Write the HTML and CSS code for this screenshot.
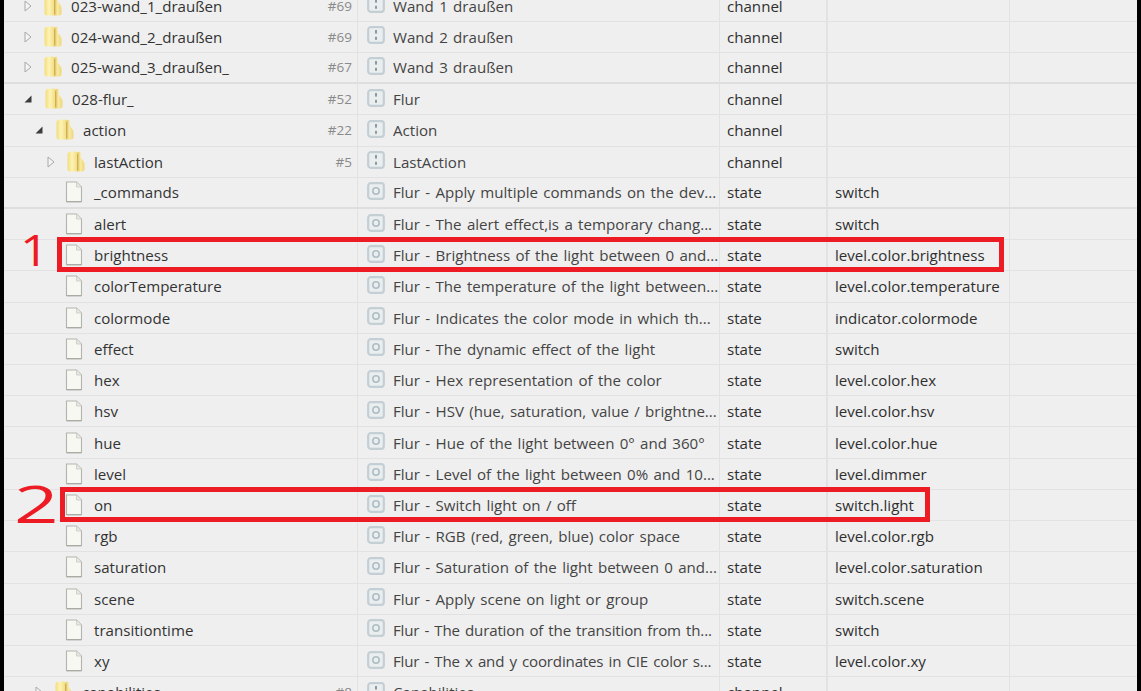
FILE: index.html
```html
<!DOCTYPE html>
<html lang="de">
<head>
<meta charset="utf-8">
<title>Objekte</title>
<link rel="stylesheet" href="styles.css">
</head>
<body>
<svg class="defs" width="0" height="0" aria-hidden="true">
  <defs>
    <linearGradient id="fg" x1="0" x2="1" y1="0" y2="0">
      <stop offset="0" stop-color="#f3dc7c"/><stop offset=".45" stop-color="#fdf3b4"/><stop offset="1" stop-color="#f2dc82"/>
    </linearGradient>
    <linearGradient id="fr" x1="0" x2="1" y1="0" y2="0">
      <stop offset="0" stop-color="#d9bb58"/><stop offset=".5" stop-color="#f8e9a0"/><stop offset="1" stop-color="#efd677"/>
    </linearGradient>
    <symbol id="folder" viewBox="0 0 18 21">
      <path d="M9.5 2 Q13 0 13.5 1.5 L14 7 Q17.8 11 17.5 14 L17.5 18 Q17.5 20.5 15 20.5 H9.5 Z" fill="url(#fr)"/>
      <path d="M.5 3.5 Q.5 1 3 .8 L8.5 .5 Q10.5 .5 10.5 2.5 V18.5 Q10.5 20.5 8.5 20.5 H3 Q.5 20.5 .5 18 Z" fill="url(#fg)"/>
      <path d="M10.7 3 V19" stroke="#caa74b" stroke-width="1" fill="none"/>
    </symbol>
    <symbol id="file" viewBox="0 0 18 22">
      <path d="M1.5 1 H11.5 L16.5 6 V20.5 H1.5 Z" fill="#f8f8f3" stroke="#b4b4af" stroke-width="1.1"/>
      <path d="M11.5 1 V6 H16.5" fill="#e8e8e3" stroke="#c8c8c4" stroke-width=".8"/>
      <path d="M1.5 20.8 H16.5" stroke="#a9a9a4" stroke-width="1.2"/>
    </symbol>
    <symbol id="chan" viewBox="0 0 18 18">
      <rect x="1.2" y="1.2" width="15.6" height="15.6" rx="2.5" fill="#ebeeef" stroke="#c3cfd5" stroke-width="2.2"/>
      <rect x="8" y="4" width="2" height="3.6" fill="#8b9ba3"/>
      <rect x="8" y="10.8" width="2" height="3" fill="#8b9ba3"/>
    </symbol>
    <symbol id="stat" viewBox="0 0 18 18">
      <rect x="1.2" y="1.2" width="15.6" height="15.6" rx="2.5" fill="#ebeeef" stroke="#c3cfd5" stroke-width="2.2"/>
      <circle cx="9" cy="9" r="3.2" fill="none" stroke="#aebdc5" stroke-width="1.6"/>
    </symbol>
    <symbol id="closed" viewBox="0 0 8 12">
      <path d="M1 1 L7 6 L1 11 Z" fill="#f4f4f4" stroke="#a8a8a8" stroke-width="1"/>
    </symbol>
    <symbol id="open" viewBox="0 0 8 8">
      <path d="M7.5 .5 V7.5 H.5 Z" fill="#3c3c3c"/>
    </symbol>
  </defs>
</svg>

<main class="tree">

<div class="row"><div class="c-name l0"><svg class="tw closed"><use href="#closed"/></svg><svg class="ic-folder"><use href="#folder"/></svg><span class="nm">023-wand_1_draußen</span><span class="num">#69</span></div><div class="c-title"><svg class="ic-type"><use href="#chan"/></svg><span class="tt">Wand 1 draußen</span></div><div class="c-type">channel</div><div class="c-role"></div><div class="c-rest"></div></div>
<div class="row"><div class="c-name l0"><svg class="tw closed"><use href="#closed"/></svg><svg class="ic-folder"><use href="#folder"/></svg><span class="nm">024-wand_2_draußen</span><span class="num">#69</span></div><div class="c-title"><svg class="ic-type"><use href="#chan"/></svg><span class="tt">Wand 2 draußen</span></div><div class="c-type">channel</div><div class="c-role"></div><div class="c-rest"></div></div>
<div class="row strong"><div class="c-name l0"><svg class="tw closed"><use href="#closed"/></svg><svg class="ic-folder"><use href="#folder"/></svg><span class="nm">025-wand_3_draußen_</span><span class="num">#67</span></div><div class="c-title"><svg class="ic-type"><use href="#chan"/></svg><span class="tt">Wand 3 draußen</span></div><div class="c-type">channel</div><div class="c-role"></div><div class="c-rest"></div></div>
<div class="row"><div class="c-name l0"><svg class="tw opened"><use href="#open"/></svg><svg class="ic-folder"><use href="#folder"/></svg><span class="nm">028-flur_</span><span class="num">#52</span></div><div class="c-title"><svg class="ic-type"><use href="#chan"/></svg><span class="tt">Flur</span></div><div class="c-type">channel</div><div class="c-role"></div><div class="c-rest"></div></div>
<div class="row"><div class="c-name l1"><svg class="tw opened"><use href="#open"/></svg><svg class="ic-folder"><use href="#folder"/></svg><span class="nm">action</span><span class="num">#22</span></div><div class="c-title"><svg class="ic-type"><use href="#chan"/></svg><span class="tt">Action</span></div><div class="c-type">channel</div><div class="c-role"></div><div class="c-rest"></div></div>
<div class="row"><div class="c-name l2"><svg class="tw closed"><use href="#closed"/></svg><svg class="ic-folder"><use href="#folder"/></svg><span class="nm">lastAction</span><span class="num">#5</span></div><div class="c-title"><svg class="ic-type"><use href="#chan"/></svg><span class="tt">LastAction</span></div><div class="c-type">channel</div><div class="c-role"></div><div class="c-rest"></div></div>

<div class="row strong"><div class="c-name l2"><span class="tw"></span><svg class="ic-file"><use href="#file"/></svg><span class="nm">_commands</span></div><div class="c-title"><svg class="ic-type"><use href="#stat"/></svg><span class="tt">Flur - Apply multiple commands on the dev...</span></div><div class="c-type">state</div><div class="c-role">switch</div><div class="c-rest"></div></div>
<div class="row"><div class="c-name l2"><span class="tw"></span><svg class="ic-file"><use href="#file"/></svg><span class="nm">alert</span></div><div class="c-title"><svg class="ic-type"><use href="#stat"/></svg><span class="tt">Flur - The alert effect,is a temporary chang...</span></div><div class="c-type">state</div><div class="c-role">switch</div><div class="c-rest"></div></div>
<div class="row"><div class="c-name l2"><span class="tw"></span><svg class="ic-file"><use href="#file"/></svg><span class="nm">brightness</span></div><div class="c-title"><svg class="ic-type"><use href="#stat"/></svg><span class="tt">Flur - Brightness of the light between 0 and...</span></div><div class="c-type">state</div><div class="c-role">level.color.brightness</div><div class="c-rest"></div></div>
<div class="row"><div class="c-name l2"><span class="tw"></span><svg class="ic-file"><use href="#file"/></svg><span class="nm">colorTemperature</span></div><div class="c-title"><svg class="ic-type"><use href="#stat"/></svg><span class="tt">Flur - The temperature of the light between...</span></div><div class="c-type">state</div><div class="c-role">level.color.temperature</div><div class="c-rest"></div></div>
<div class="row"><div class="c-name l2"><span class="tw"></span><svg class="ic-file"><use href="#file"/></svg><span class="nm">colormode</span></div><div class="c-title"><svg class="ic-type"><use href="#stat"/></svg><span class="tt">Flur - Indicates the color mode in which th...</span></div><div class="c-type">state</div><div class="c-role">indicator.colormode</div><div class="c-rest"></div></div>
<div class="row"><div class="c-name l2"><span class="tw"></span><svg class="ic-file"><use href="#file"/></svg><span class="nm">effect</span></div><div class="c-title"><svg class="ic-type"><use href="#stat"/></svg><span class="tt">Flur - The dynamic effect of the light</span></div><div class="c-type">state</div><div class="c-role">switch</div><div class="c-rest"></div></div>
<div class="row"><div class="c-name l2"><span class="tw"></span><svg class="ic-file"><use href="#file"/></svg><span class="nm">hex</span></div><div class="c-title"><svg class="ic-type"><use href="#stat"/></svg><span class="tt">Flur - Hex representation of the color</span></div><div class="c-type">state</div><div class="c-role">level.color.hex</div><div class="c-rest"></div></div>
<div class="row"><div class="c-name l2"><span class="tw"></span><svg class="ic-file"><use href="#file"/></svg><span class="nm">hsv</span></div><div class="c-title"><svg class="ic-type"><use href="#stat"/></svg><span class="tt">Flur - HSV (hue, saturation, value / brightne...</span></div><div class="c-type">state</div><div class="c-role">level.color.hsv</div><div class="c-rest"></div></div>
<div class="row"><div class="c-name l2"><span class="tw"></span><svg class="ic-file"><use href="#file"/></svg><span class="nm">hue</span></div><div class="c-title"><svg class="ic-type"><use href="#stat"/></svg><span class="tt">Flur - Hue of the light between 0° and 360°</span></div><div class="c-type">state</div><div class="c-role">level.color.hue</div><div class="c-rest"></div></div>
<div class="row"><div class="c-name l2"><span class="tw"></span><svg class="ic-file"><use href="#file"/></svg><span class="nm">level</span></div><div class="c-title"><svg class="ic-type"><use href="#stat"/></svg><span class="tt">Flur - Level of the light between 0% and 10...</span></div><div class="c-type">state</div><div class="c-role">level.dimmer</div><div class="c-rest"></div></div>
<div class="row"><div class="c-name l2"><span class="tw"></span><svg class="ic-file"><use href="#file"/></svg><span class="nm">on</span></div><div class="c-title"><svg class="ic-type"><use href="#stat"/></svg><span class="tt">Flur - Switch light on / off</span></div><div class="c-type">state</div><div class="c-role">switch.light</div><div class="c-rest"></div></div>
<div class="row"><div class="c-name l2"><span class="tw"></span><svg class="ic-file"><use href="#file"/></svg><span class="nm">rgb</span></div><div class="c-title"><svg class="ic-type"><use href="#stat"/></svg><span class="tt">Flur - RGB (red, green, blue) color space</span></div><div class="c-type">state</div><div class="c-role">level.color.rgb</div><div class="c-rest"></div></div>
<div class="row"><div class="c-name l2"><span class="tw"></span><svg class="ic-file"><use href="#file"/></svg><span class="nm">saturation</span></div><div class="c-title"><svg class="ic-type"><use href="#stat"/></svg><span class="tt">Flur - Saturation of the light between 0 and...</span></div><div class="c-type">state</div><div class="c-role">level.color.saturation</div><div class="c-rest"></div></div>
<div class="row"><div class="c-name l2"><span class="tw"></span><svg class="ic-file"><use href="#file"/></svg><span class="nm">scene</span></div><div class="c-title"><svg class="ic-type"><use href="#stat"/></svg><span class="tt">Flur - Apply scene on light or group</span></div><div class="c-type">state</div><div class="c-role">switch.scene</div><div class="c-rest"></div></div>
<div class="row"><div class="c-name l2"><span class="tw"></span><svg class="ic-file"><use href="#file"/></svg><span class="nm">transitiontime</span></div><div class="c-title"><svg class="ic-type"><use href="#stat"/></svg><span class="tt tight">Flur - The duration of the transition from th...</span></div><div class="c-type">state</div><div class="c-role">switch</div><div class="c-rest"></div></div>
<div class="row"><div class="c-name l2"><span class="tw"></span><svg class="ic-file"><use href="#file"/></svg><span class="nm">xy</span></div><div class="c-title"><svg class="ic-type"><use href="#stat"/></svg><span class="tt tight">Flur - The x and y coordinates in CIE color s...</span></div><div class="c-type">state</div><div class="c-role">level.color.xy</div><div class="c-rest"></div></div>
<div class="row"><div class="c-name l1"><svg class="tw closed"><use href="#closed"/></svg><svg class="ic-folder"><use href="#folder"/></svg><span class="nm">capabilities</span><span class="num">#8</span></div><div class="c-title"><svg class="ic-type"><use href="#chan"/></svg><span class="tt">Capabilities</span></div><div class="c-type">channel</div><div class="c-role"></div><div class="c-rest"></div></div>

</main>

<div class="mark mark-one"></div>
<div class="mark mark-two"></div>
<span class="hand hand-one">1</span>
<span class="hand hand-two">2</span>
</body>
</html>
```

FILE: styles.css
```css
html, body {
  margin: 0;
  height: 691px;
  overflow: hidden;
  background: #000;
}

body {
  position: relative;
  font-family: "Open Sans", "Noto Sans", sans-serif;
  font-size: 15.1px;
  color: #2e2e2e;
}

.defs {
  position: absolute;
}

.tree {
  margin: -9.6px 4px 0;
  background: #efefef;
}

.row {
  display: grid;
  grid-template-columns: 354px 362px 108px 182px 1fr;
  height: 31.22px;
  box-sizing: border-box;
  border-bottom: 1px solid #e2e2e2;
  align-items: stretch;
}

.row.strong {
  border-bottom: 2px solid #dedede;
}

.row > div {
  display: flex;
  align-items: center;
  min-width: 0;
  border-right: 1px solid #e2e2e2;
  box-sizing: border-box;
  white-space: nowrap;
}

.row > .c-rest {
  border-right: 0;
}

.row > .c-type {
  padding-left: 7px;
  border-right-width: 2px;
}

.row > .c-role {
  padding-left: 7px;
}

.l0 { padding-left: 19px; }
.l1 { padding-left: 30px; }
.l2 { padding-left: 42px; }

.tw {
  flex: none;
  width: 10px;
  height: 12px;
  margin-right: 9px;
}

.tw.opened {
  height: 8px;
  width: 8px;
  margin: 0 11px 0 1px;
}

.ic-folder {
  flex: none;
  width: 18px;
  height: 21px;
  margin: -1px 11px 0 2px;
}

.ic-file {
  flex: none;
  width: 18px;
  height: 22px;
  margin-right: 11px;
}

.c-name .ic-folder + .nm {
  margin-left: -2px;
}

.nm {
  flex: 1;
  color: #333;
}

.num {
  color: #8a8a8a;
  font-size: 13.5px;
  padding-right: 5px;
}

.ic-type {
  flex: none;
  width: 18px;
  height: 18px;
  margin: -3px 8px 0 9px;
}

.tt {
  flex: 1;
  min-width: 0;
  overflow: hidden;
  word-spacing: 1.4px;
  color: #444;
}

.tt.tight {
  letter-spacing: -.17px;
}

.mark {
  position: absolute;
  box-sizing: border-box;
  border: 5px solid #ed1c24;
}

.mark-one {
  left: 57px;
  top: 237px;
  width: 947px;
  height: 35px;
}

.mark-two {
  left: 60px;
  top: 487px;
  width: 870px;
  height: 35px;
}

.hand {
  position: absolute;
  color: #ed1c24;
  font-family: "Open Sans", sans-serif;
  line-height: 1;
}

.hand-one {
  left: 20px;
  top: 227px;
  font-size: 44px;
  transform: scaleX(1.15);
  transform-origin: left top;
}

.hand-two {
  left: 14px;
  top: 477px;
  font-size: 52px;
  transform: scaleX(1.5);
  transform-origin: left top;
}
```
